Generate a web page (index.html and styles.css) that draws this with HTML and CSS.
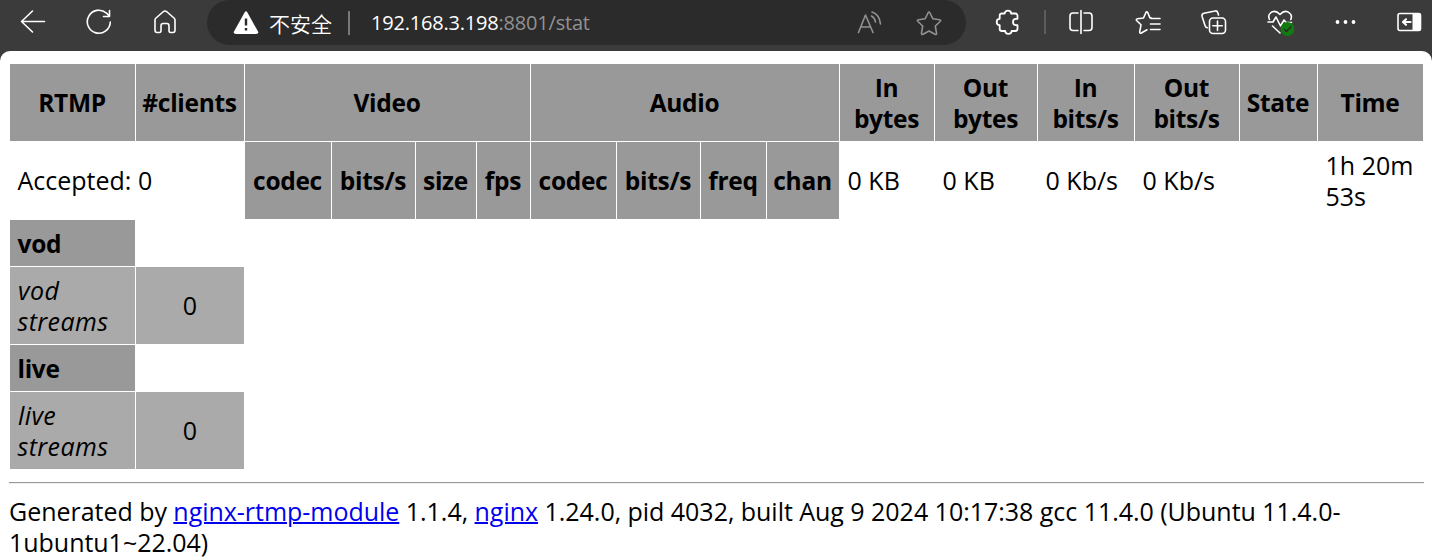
FILE: index.html
```html
<!DOCTYPE html>
<html lang="en">
<head>
<meta charset="utf-8">
<title>RTMP statistics</title>
<link rel="stylesheet" href="styles.css">
</head>
<body>
<header class="toolbar">
  <nav class="nav">
    <svg class="icon" viewBox="0 0 28 28"><path d="M25.500 13.500H2.500M13.500 3 2.500 13.500l11 10.500"/></svg>
    <svg class="icon" viewBox="0 0 28 28"><path d="M25.300 14A11.500 11.500 0 1 1 21.500 5.200L24.500 8M24.500 2.500v6h-6"/></svg>
    <svg class="icon" viewBox="0 0 28 28"><path d="M4 12q0-1 1-2l7.500-6.500q1.500-1 3 0L23 10q1 1 1 2v10q0 2.500-2 2.500h-2.500q-1.500 0-1.500-2V18q0-2.500-2-2.500h-4q-2 0-2 2.500v4.500q0 2-1.500 2H6q-2 0-2-2.500z"/></svg>
  </nav>
  <div class="address">
    <svg class="warning" viewBox="0 0 26 26"><path class="solid" d="M11.600 2.500q1.400-2.400 2.800 0L25 21.500q1 2.500-2 2.500H3q-3 0-2-2.500z"/><path class="mark" d="M13 8.500v7M13 18v2.500"/></svg>
    <span class="security">不安全</span>
    <span class="divider"></span>
    <span class="url"><span class="host">192.168.3.198</span>:8801/stat</span>
    <svg class="icon muted read" viewBox="0 0 28 28"><path d="M3.500 23.500 10.500 6l7.500 17.500M6 18h9M16.500 7q3 1.500 4 6M17 3q7.500 2.500 8.500 12"/></svg>
    <svg class="icon muted" viewBox="0 0 28 28"><path d="M13 4q1-2 2 0l2.800 5.700 6.700 1q2 .4.600 1.800L20.300 17l1.200 7q.2 2-1.500 1.200L14 22l-6 3.200q-1.700.8-1.500-1.200l1.200-7-4.800-4.500q-1.400-1.400.6-1.800l6.700-1z"/></svg>
  </div>
  <nav class="actions">
    <svg class="icon strong" viewBox="0 0 28 28"><path d="M8 5.500h2.700a3.200 2.800 0 0 1 6.400 0H21q2.500 0 2.500 2v3.300h-1.500a3 3.200 0 0 0 0 6.400h1.500V21q0 2-2.500 2h-3.400a3.200 2.800 0 0 1-6.400 0H8q-2.300 0-2.300-2v-3.800a3 3.200 0 0 1 0-6.400V7.500q0-2 2.300-2z"/></svg>
    <span class="divider"></span>
    <svg class="icon split" viewBox="0 0 28 28"><path d="M11 5H6Q3 5 3 8v11.500q0 3 3 3h5M17 5h5q3 0 3 3v11.500q0 3-3 3h-5M14 2.500v23"/></svg>
    <svg class="icon favorites" viewBox="0 0 28 28"><path d="M17.500 10H16l-2.200-5.300q-1-2-2 0L9.500 10l-6 .8q-2 .4-.7 1.900L7 16.800l-1.300 7q0 2 1.700 1.200L13 21.800M17 10.500h9M16.500 16H26M16.500 21.500H26"/></svg>
    <svg class="icon collections" viewBox="0 0 28 28"><rect x="9.500" y="10" width="16" height="15.500" rx="3.500"/><path d="M17.500 13v9.500M12.800 17.800h9.500M18.500 7l-.7-2.200q-.7-2.300-2.800-1.800L4 5.200q-2.500.7-2 3l3 9.300q.7 2.300 2.500 2.300"/></svg>
    <svg class="icon health" viewBox="0 0 28 28"><path d="M3.500 11.500q-2-4 1-6.500 4.500-4 9.500 1.500Q19 1 23.500 5q3 2.500 1.300 6.500M2 14h5l3-5 4.500 9 3.500-6 2 2.500h5.500M6.500 18l7.500 7"/><circle class="ok" cx="21.500" cy="21" r="6.900"/><path class="tick" d="m18.500 21.500 2 2 4.500-4.700"/></svg>
    <svg class="icon more" viewBox="0 0 28 28"><g class="solid"><circle cx="6.500" cy="14" r="1.900"/><circle cx="14.500" cy="14" r="1.900"/><circle cx="22.500" cy="14" r="1.900"/></g></svg>
    <svg class="icon sidebar" viewBox="0 0 28 28"><rect x="3" y="5.500" width="22.500" height="17" rx="2"/><path class="solid" d="M17.500 5H24q2 0 2 2v14q0 2-2 2h-6.500z"/><path class="heavy" d="M15.500 14H8.500M11 11.300 8 14l3 2.700"/></svg>
  </nav>
</header>
<main class="page">
  <table class="stats">
    <colgroup>
      <col class="c-app"><col class="c-clients">
      <col class="c-vcodec"><col class="c-bits"><col class="c-size"><col class="c-fps">
      <col class="c-acodec"><col class="c-bits"><col class="c-freq"><col class="c-chan">
      <col class="c-inbytes"><col class="c-outbytes"><col class="c-inbits"><col class="c-outbits"><col class="c-state"><col class="c-time">
    </colgroup>
    <tr class="tall">
      <th>RTMP</th><th>#clients</th><th colspan="4">Video</th><th colspan="4">Audio</th>
      <th>In bytes</th><th>Out bytes</th><th>In bits/s</th><th>Out bits/s</th><th>State</th><th>Time</th>
    </tr>
    <tr class="tall">
      <td colspan="2">Accepted: 0</td>
      <th>codec</th><th>bits/s</th><th>size</th><th>fps</th>
      <th>codec</th><th>bits/s</th><th>freq</th><th>chan</th>
      <td>0 KB</td><td>0 KB</td><td>0 Kb/s</td><td>0 Kb/s</td><td></td><td>1h 20m 53s</td>
    </tr>
    <tr class="short"><td class="app">vod</td></tr>
    <tr class="tall streams"><td><i>vod streams</i></td><td class="count">0</td></tr>
    <tr class="short"><td class="app">live</td></tr>
    <tr class="tall streams"><td><i>live streams</i></td><td class="count">0</td></tr>
  </table>
  <hr class="rule">
  <footer class="generated">Generated by <a href="#">nginx-rtmp-module</a> 1.1.4, <a href="#">nginx</a> 1.24.0, pid 4032, built Aug 9 2024 10:17:38 gcc 11.4.0 (Ubuntu 11.4.0-<br>1ubuntu1~22.04)</footer>
</main>
</body>
</html>
```
FILE: styles.css
```css
body {
  margin: 0;
  height: 559px;
  overflow: hidden;
  background: #3b3b3b;
  color: #000;
  font: 25px/31px "Open Sans", "Noto Sans", "Noto Sans CJK SC", sans-serif;
}

/* Browser toolbar */
.toolbar {
  display: flex;
  height: 51px;
}
.nav {
  display: flex;
  align-items: center;
  gap: 38px;
  width: 188px;
  height: 44px;
  padding-left: 19px;
}
.icon {
  flex: none;
  width: 28px;
  height: 28px;
  fill: none;
  stroke: #fff;
  stroke-width: 1.6;
  stroke-linecap: round;
  stroke-linejoin: round;
}
.strong { stroke-width: 1.8; }
.muted { stroke: #929292; }
.solid { fill: #fff; stroke: none; }
.heavy { stroke-width: 2.2; }
.ok { fill: #107c10; stroke: none; }
.tick { stroke: #2b2b2b; }
.address {
  display: flex;
  align-items: center;
  box-sizing: border-box;
  width: 759px;
  height: 45px;
  padding: 0 23px 0 26px;
  border-radius: 23px;
  background: #2b2b2b;
}
.warning { width: 26px; height: 26px; }
.mark { stroke: #2b2b2b; stroke-width: 2.4; }
.security {
  width: 79px;
  margin-left: 10px;
  color: #fff;
  font: 350 21px/28px "Noto Sans CJK SC", sans-serif;
}
.divider {
  flex: none;
  width: 2px;
  height: 24px;
  background: #777;
}
.url {
  flex: 1;
  margin-left: 21px;
  color: #929292;
  font-size: 20px;
  letter-spacing: -0.2px;
}
.host { color: #fff; }
.read { margin-right: 32px; }
.actions {
  display: flex;
  align-items: center;
  height: 44px;
  padding-left: 28px;
}
.actions .divider { margin-left: 22px; background: #5c5c5c; }
.split { margin-left: 21px; }
.favorites { margin-left: 39px; }
.collections { margin-left: 38px; }
.health { margin-left: 38px; }
.more { margin-left: 37px; }
.sidebar { margin-left: 36px; }

/* Statistics page */
.page {
  height: 508px;
  box-sizing: border-box;
  padding: 12px 8px 0 9px;
  border-radius: 10px 10px 0 0;
  background: #fff;
}
.stats {
  width: 1415px;
  table-layout: fixed;
  border-spacing: 1px;
}
.c-app { width: 125px; }
.c-clients { width: 108px; }
.c-vcodec { width: 86px; }
.c-bits { width: 83px; }
.c-size { width: 60px; }
.c-fps { width: 53px; }
.c-acodec { width: 85px; }
.c-freq { width: 65px; }
.c-chan { width: 72px; }
.c-inbytes { width: 94px; }
.c-outbytes { width: 102px; }
.c-inbits { width: 96px; }
.c-outbits { width: 104px; }
.c-state { width: 77px; }
.c-time { width: 105px; }
.tall { height: 77px; }
.short { height: 46px; }
td { padding: 0 0 0 7.5px; }
th {
  padding: 0 5px 0 4px;
  background: #999;
}
th, .app {
  font-size: 24.5px;
  font-weight: 700;
  letter-spacing: -0.3px;
}
.app { background: #999; }
.streams td { background: #aaa; }
.streams i { margin-left: 0.5px; letter-spacing: 0.4px; }
.streams .count { padding: 0; text-align: center; }
.rule {
  width: 1415px;
  height: 0;
  margin: 12px 0;
  border: 0;
  border-top: 1px solid #999;
  border-bottom: 1px solid #eee;
}
.generated {
  white-space: nowrap;
  letter-spacing: -0.03px;
}
.generated a { color: #00e; text-decoration-thickness: 2px; }
```
